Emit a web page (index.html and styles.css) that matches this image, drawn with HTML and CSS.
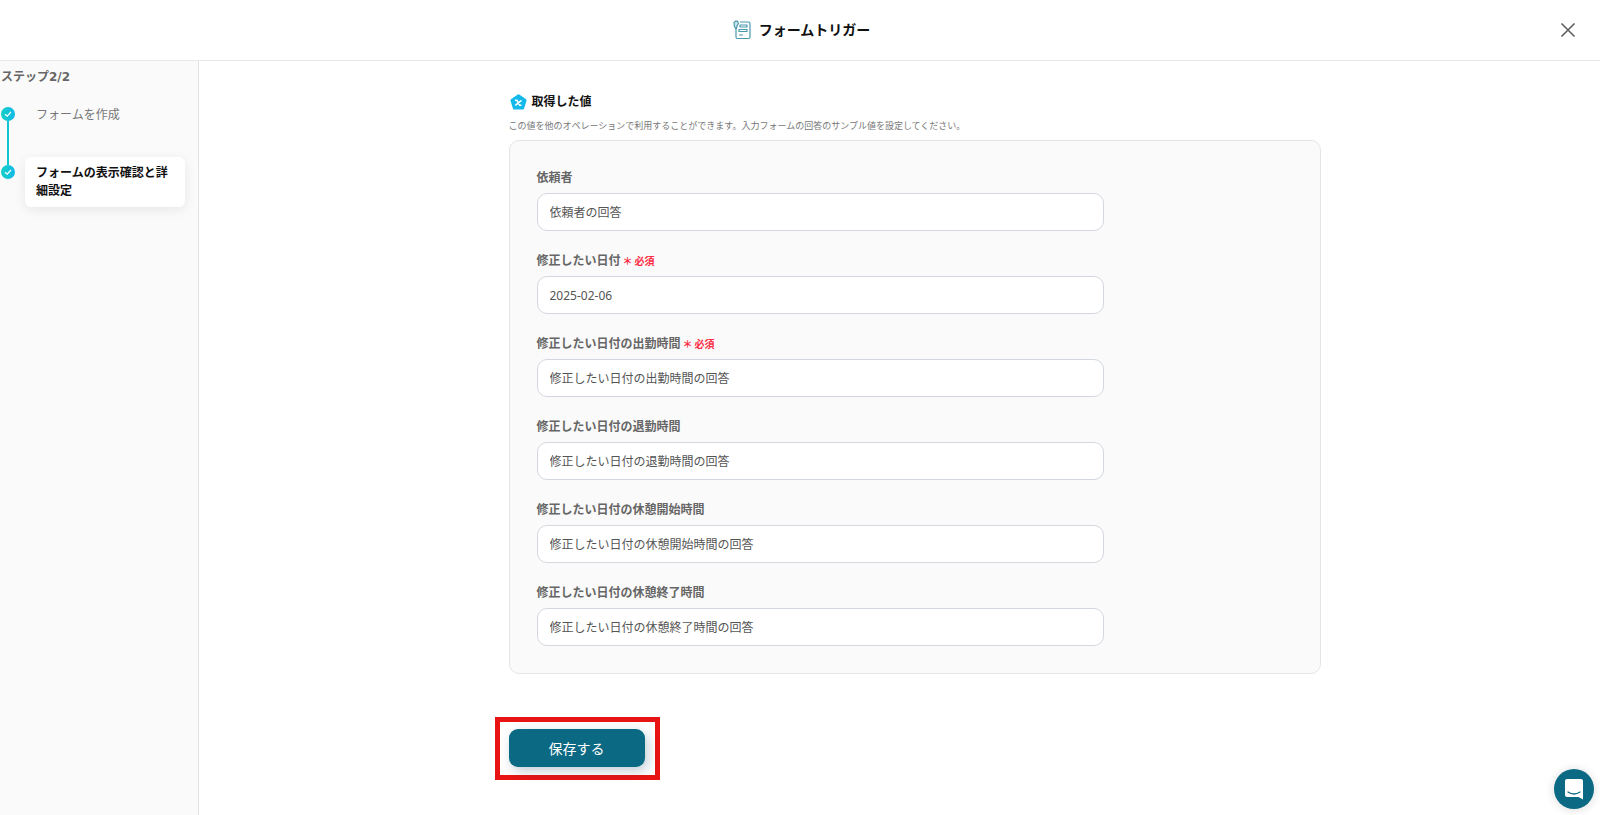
FILE: index.html
```html
<!DOCTYPE html>
<html lang="ja">
<head>
    <meta charset="UTF-8">
    <meta name="viewport" content="width=device-width, initial-scale=1.0">
    <title>フォームトリガー</title>
    <link rel="stylesheet" href="styles.css">
</head>
<body>
    <header class="header">
        <svg class="header-icon" width="18" height="20" viewBox="0 0 18 20" fill="none" stroke="#4a99ad" stroke-width="1.2" stroke-linejoin="round">
            <path d="M7 2H15.500A1.500 1.500 0 0 1 17 3.500V17A1.500 1.500 0 0 1 15.500 18.500H4.500A1.500 1.500 0 0 1 3 17V8"/>
            <path d="M1 2.500L2.500 1.200H4.500L5.500 3.500L4.500 5L3 9L1.500 6.500Z" fill="#cfe6ec"/>
            <path d="M7 5H14V7H7ZM6 9.500H14V11.500H6ZM6 15H10"/>
        </svg>
        <h1 class="header-title">フォームトリガー</h1>
        <button type="button" class="close-button" aria-label="閉じる">
            <svg width="16" height="16" viewBox="0 0 16 16" stroke="#5f5f5f" stroke-width="1.6">
                <path d="M1.500 1.500L14.500 14.500M14.500 1.500L1.500 14.500"/>
            </svg>
        </button>
    </header>

    <div class="layout">
        <aside class="sidebar">
            <h2 class="sidebar-title">ステップ2/2</h2>
            <ol class="steps">
                <li class="step">
                    <span class="step-dot">
                        <svg width="8" height="8" viewBox="0 0 8 8" fill="none" stroke="#fff" stroke-width="1.2"><path d="M1 4.200L3.200 6.200L7 2"/></svg>
                    </span>
                    <span class="step-label">フォームを作成</span>
                </li>
                <li class="step">
                    <span class="step-dot">
                        <svg width="8" height="8" viewBox="0 0 8 8" fill="none" stroke="#fff" stroke-width="1.2"><path d="M1 4.200L3.200 6.200L7 2"/></svg>
                    </span>
                    <span class="step-label step-label--active">フォームの表示確認と詳細設定</span>
                </li>
            </ol>
        </aside>

        <main class="main">
            <form class="content">
                <div class="section-heading">
                    <svg width="18" height="18" viewBox="0 0 18 18">
                        <path d="M9.500 2.500L16.300 7.300L13.800 15.300H5.200L2.700 7.300Z" fill="#12b9ea" stroke="#12b9ea" stroke-width="2.500" stroke-linejoin="round"/>
                        <path d="M6 7.300H7.800L10.800 12.300H12.500M12.500 7.300L6.300 12.300" fill="none" stroke="#fff" stroke-width="1.500"/>
                    </svg>
                    <h2>取得した値</h2>
                </div>
                <p class="section-note">この値を他のオペレーションで利用することができます。入力フォームの回答のサンプル値を設定してください。</p>

                <div class="panel">
                    <div class="field">
                        <label for="requester">依頼者</label>
                        <input type="text" id="requester" class="field-input" value="依頼者の回答">
                    </div>
                    <div class="field">
                        <label for="date">修正したい日付<span class="required">＊</span><span class="required">必須</span></label>
                        <input type="text" id="date" class="field-input" value="2025-02-06">
                    </div>
                    <div class="field">
                        <label for="clock_in">修正したい日付の出勤時間<span class="required">＊</span><span class="required">必須</span></label>
                        <input type="text" id="clock_in" class="field-input" value="修正したい日付の出勤時間の回答">
                    </div>
                    <div class="field">
                        <label for="clock_out">修正したい日付の退勤時間</label>
                        <input type="text" id="clock_out" class="field-input" value="修正したい日付の退勤時間の回答">
                    </div>
                    <div class="field">
                        <label for="break_start">修正したい日付の休憩開始時間</label>
                        <input type="text" id="break_start" class="field-input" value="修正したい日付の休憩開始時間の回答">
                    </div>
                    <div class="field">
                        <label for="break_end">修正したい日付の休憩終了時間</label>
                        <input type="text" id="break_end" class="field-input" value="修正したい日付の休憩終了時間の回答">
                    </div>
                </div>

                <div class="save-frame">
                    <button type="submit" class="save-button">保存する</button>
                </div>
            </form>
        </main>
    </div>

    <button type="button" class="chat-button" aria-label="チャット">
        <svg width="20" height="22" viewBox="0 0 20 22">
            <path d="M3 1H17A2 2 0 0 1 19 3V21.500L14.500 19H3A2 2 0 0 1 1 17V3A2 2 0 0 1 3 1Z" fill="#fff"/>
            <path d="M4 14Q10 18 16 14" fill="none" stroke="#0b6983" stroke-width="1.300" stroke-linecap="round"/>
        </svg>
    </button>
</body>
</html>
```
FILE: styles.css
```css
*, *::after, *::before {
    margin: 0;
    padding: 0;
    box-sizing: border-box;
}

body {
    min-height: 100vh;
    display: flex;
    flex-direction: column;
    font-family: "Noto Sans", "Noto Sans CJK JP", sans-serif;
    font-size: 12px;
    line-height: 18px;
    background-color: #fff;
    color: #666;
}

button {
    border: none;
    cursor: pointer;
    font-family: inherit;
}

/* Header */
.header {
    position: relative;
    height: 61px;
    padding: 0 0 1px 3px;
    display: flex;
    justify-content: center;
    align-items: center;
    gap: 8px;
    border-bottom: 1px solid #e8e8e8;
}

.header-title {
    font-size: 14px;
    font-weight: 700;
    line-height: 20px;
    color: #111;
}

.close-button {
    position: absolute;
    top: 18px;
    right: 20px;
    width: 24px;
    height: 24px;
    display: flex;
    justify-content: center;
    align-items: center;
    background: none;
}

.layout {
    flex: 1;
    display: flex;
}

/* Sidebar */
.sidebar {
    width: 199px;
    flex-shrink: 0;
    padding: 7px 13px 0 1px;
    background-color: #fafafa;
    border-right: 1px solid #e4e4e4;
}

.sidebar-title {
    margin-bottom: 13px;
    font-family: "DejaVu Sans", "Noto Sans CJK JP", sans-serif;
    font-size: 12px;
    font-weight: 700;
}

.steps {
    display: flex;
    flex-direction: column;
    gap: 26px;
    list-style: none;
}

.step {
    position: relative;
    display: flex;
    align-items: flex-start;
    gap: 10px;
}

/* line between two dots */
.step:not(:last-child)::after {
    content: "";
    position: absolute;
    top: 22px;
    bottom: -34px;
    left: 6px;
    width: 2px;
    background-color: #12c6cf;
}

.step-dot {
    width: 14px;
    height: 14px;
    margin-top: 8px;
    flex-shrink: 0;
    display: flex;
    justify-content: center;
    align-items: center;
    border-radius: 50%;
    background: linear-gradient(90deg, #14cfc4, #12b9ea);
}

.step-label {
    flex: 1;
    padding: 7px 11px;
    color: #777;
}

.step-label--active {
    border-radius: 6px;
    background-color: #fff;
    box-shadow: 0 3px 12px rgba(0, 0, 0, 0.08);
    font-weight: 700;
    color: #111;
}

/* Main */
.main {
    flex: 1;
    padding: 32px 0;
}

.content {
    max-width: 842px;
    margin: 0 auto;
    padding-left: 30px;
}

.section-heading {
    display: flex;
    align-items: center;
    gap: 5px;
    color: #111;
}

.section-heading h2 {
    font-size: 12px;
    font-weight: 700;
}

.section-note {
    margin: 8px 0 7px;
    font-size: 9px;
    line-height: 14px;
    color: #777;
}

.panel {
    display: flex;
    flex-direction: column;
    gap: 21px;
    padding: 28px 27px 27px;
    border: 1px solid #e4e5e7;
    border-radius: 10px;
    background-color: #fafafa;
}

.field {
    display: flex;
    flex-direction: column;
    gap: 6px;
}

.field label {
    height: 18px;
    font-weight: 700;
}

.required {
    margin-left: 2px;
    font-size: 10px;
    color: #fb2c44;
}

.field-input {
    width: 75%;
    height: 38px;
    padding: 0 12px;
    border: 1px solid #d3d8de;
    border-radius: 10px;
    outline: none;
    background-color: #fff;
    font-family: inherit;
    font-size: 12px;
    color: #555;
}

/* Save button */
.save-frame {
    width: fit-content;
    margin: 43px 0 0 -14px;
    padding: 7px 10px 8px 9px;
    border: 5px solid #e81414;
}

.save-button {
    width: 136px;
    height: 38px;
    border-radius: 9px;
    background-color: #0b6983;
    box-shadow: 3px 4px 12px rgba(11, 60, 90, 0.25);
    font-size: 14px;
    color: #fff;
}

.chat-button {
    position: fixed;
    right: 6px;
    bottom: 6px;
    width: 40px;
    height: 40px;
    display: flex;
    justify-content: center;
    align-items: center;
    border-radius: 50%;
    background-color: #0b6983;
    box-shadow: 0 1px 10px rgba(0, 0, 0, 0.15);
}
```
